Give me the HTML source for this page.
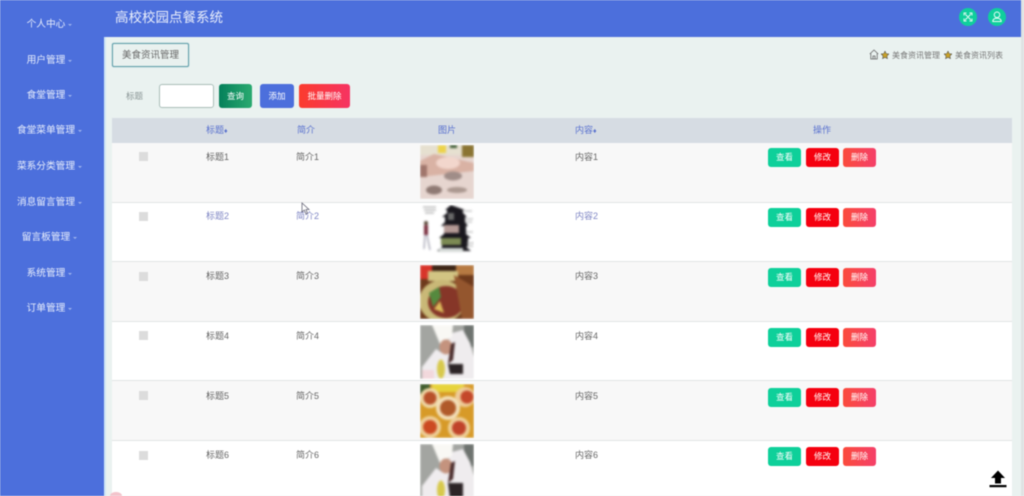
<!DOCTYPE html>
<html lang="zh"><head><meta charset="utf-8"><title>高校校园点餐系统</title>
<style>
*{box-sizing:border-box;margin:0;padding:0}
html,body{width:1024px;height:496px;overflow:hidden;background:#eaf2f0;font-family:"Liberation Sans","Noto Sans CJK SC",sans-serif}
.a{position:absolute}
#wrap{position:absolute;left:0;top:0;width:1024px;height:496px;overflow:hidden;filter:blur(.5px)}
.side{left:0;top:0;width:104px;height:496px;background:#4c6fdc}
.edge{left:104px;top:37px;width:2px;height:459px;background:#cfe6f5}
.head{left:0;top:0;width:1021px;height:37px;background:#4c6fdc}
.sb{left:1021px;top:0;width:3px;height:496px;background:#dfe3e3}
.m{color:#e8eefc;font-size:9.7px;line-height:14px;width:104px;text-align:center;white-space:nowrap}
.m i{position:absolute;width:0;height:0;border-left:2px solid transparent;border-right:2px solid transparent;border-top:2px solid #9db3ef;margin-left:3px;margin-top:6px}
.btn{color:#fff;font-size:8.5px;text-align:center;border-radius:3px;white-space:nowrap}
.t{font-size:9px;line-height:12px;color:#666;white-space:nowrap}
.th{font-size:9px;line-height:12px;color:#5a72cf;white-space:nowrap}
.row{left:112px;width:900px;border-bottom:1px solid #e2e4e4}
.cb{left:139px;width:9px;height:9px;background:#dcdcdc}
.v,.e,.d{width:33px;height:19px;line-height:19px;border-radius:3px}
.v{left:768px;background:#0ed09a}
.e{left:806px;background:#f5000f}
.d{left:843px;background:linear-gradient(90deg,#fb4b3c,#f54069)}
.img{left:420px;width:54px;height:54px;overflow:hidden}
.img svg{display:block;filter:blur(1px)}
</style></head><body>
<div id="wrap">
<div class="a side"></div>
<div class="a head"></div>
<div class="a edge"></div>
<div class="a sb"></div>
<div class="a" style="left:115px;top:9px;font-size:13.5px;line-height:18px;color:#e9eefb;white-space:nowrap">高校校园点餐系统</div>

<div class="a m" style="left:-6px;top:18px">个人中心<i></i></div>
<div class="a m" style="left:-6px;top:54px">用户管理<i></i></div>
<div class="a m" style="left:-6px;top:89px">食堂管理<i></i></div>
<div class="a m" style="left:-6px;top:124px">食堂菜单管理<i></i></div>
<div class="a m" style="left:-6px;top:160px">菜系分类管理<i></i></div>
<div class="a m" style="left:-6px;top:196px">消息留言管理<i></i></div>
<div class="a m" style="left:-6px;top:231px">留言板管理<i></i></div>
<div class="a m" style="left:-6px;top:267px">系统管理<i></i></div>
<div class="a m" style="left:-6px;top:302px">订单管理<i></i></div>

<div class="a" style="left:959px;top:8px;width:18px;height:18px;border-radius:50%;background:#10cf9c"></div>
<svg class="a" style="left:959px;top:8px" width="18" height="18" viewBox="0 0 18 18" fill="none" stroke="#e8fff8" stroke-width=".9"><path d="M6 6l6 6M12 6l-6 6M5 7.500V5h2.500M10.500 5H13v2.500M13 10.500V13h-2.500M7.500 13H5v-2.500"/></svg>
<div class="a" style="left:988px;top:8px;width:18px;height:18px;border-radius:50%;background:#10cf9c"></div>
<svg class="a" style="left:988px;top:8px" width="18" height="18" viewBox="0 0 18 18" fill="none" stroke="#e8fff8" stroke-width="1"><circle cx="9" cy="6.800" r="2.800"/><path d="M4.800 13.500c0-2.200 1.800-3.300 4.200-3.300s4.200 1.100 4.200 3.300z"/></svg>

<div class="a" style="left:112px;top:43px;width:77px;height:24px;border:1px solid #5f9eaa;border-radius:2px;background:#e9f1ef;color:#666;font-size:9.500px;line-height:23px;text-align:center;white-space:nowrap;box-shadow:0 0 1px #7fb2bd">美食资讯管理</div>

<svg class="a" style="left:869px;top:49px" width="10" height="11" viewBox="0 0 10 11" fill="none" stroke="#666" stroke-width=".8"><path d="M.8 5L5 1l4.200 4M1.800 4.500V10h6.400V4.500M4 10V7h2v3"/></svg>
<svg class="a" style="left:881px;top:51px" width="8" height="8" viewBox="0 0 10 10"><path d="M5 0l1.500 3.300 3.500.4-2.600 2.400.7 3.500L5 7.900 1.900 9.600l.7-3.500L0 3.700l3.500-.4z" fill="#c9a227" stroke="#555" stroke-width=".7"/></svg>
<div class="a" style="left:892px;top:50px;font-size:8px;line-height:11px;color:#777;white-space:nowrap">美食资讯管理</div>
<svg class="a" style="left:944px;top:51px" width="8" height="8" viewBox="0 0 10 10"><path d="M5 0l1.500 3.300 3.500.4-2.600 2.400.7 3.500L5 7.900 1.900 9.600l.7-3.500L0 3.700l3.500-.4z" fill="#c9a227" stroke="#555" stroke-width=".7"/></svg>
<div class="a" style="left:955px;top:50px;font-size:8px;line-height:11px;color:#777;white-space:nowrap">美食资讯列表</div>

<div class="a" style="left:126px;top:91px;font-size:8.500px;line-height:11px;color:#8a9696;white-space:nowrap">标题</div>
<div class="a" style="left:159px;top:84px;width:55px;height:24px;background:#fff;border:1px solid #a9bdb8;border-radius:3px"></div>
<div class="a btn" style="left:219px;top:84px;width:33px;height:24px;line-height:24px;background:linear-gradient(90deg,#05805a,#2aaa70)">查询</div>
<div class="a btn" style="left:260px;top:84px;width:34px;height:24px;line-height:24px;background:#4c6fdc">添加</div>
<div class="a btn" style="left:299px;top:84px;width:51px;height:24px;line-height:24px;background:linear-gradient(90deg,#fb3c2e,#f63462)">批量删除</div>

<div class="a" style="left:112px;top:118px;width:900px;height:25px;background:#d6dce3"></div>
<div class="a th" style="left:206px;top:124px">标题<span style="font-size:7px">♦</span></div>
<div class="a th" style="left:297px;top:124px">简介</div>
<div class="a th" style="left:438px;top:124px">图片</div>
<div class="a th" style="left:575px;top:124px">内容<span style="font-size:7px">♦</span></div>
<div class="a th" style="left:813px;top:124px">操作</div>

<div class="a row" style="top:143px;height:60px;background:#f8f8f8"></div>
<div class="a row" style="top:203px;height:59px;background:#fff"></div>
<div class="a row" style="top:262px;height:60px;background:#f8f8f8"></div>
<div class="a row" style="top:322px;height:59px;background:#fff"></div>
<div class="a row" style="top:381px;height:60px;background:#f8f8f8"></div>
<div class="a row" style="top:441px;height:55px;background:#fff;border:0"></div>

<div class="a cb" style="top:152px"></div><div class="a t" style="left:206px;top:151px">标题1</div><div class="a t" style="left:296px;top:151px">简介1</div><div class="a t" style="left:575px;top:151px">内容1</div>
<div class="a btn v" style="top:148px">查看</div><div class="a btn e" style="top:148px">修改</div><div class="a btn d" style="top:148px">删除</div>

<div class="a cb" style="top:212px"></div><div class="a t" style="left:206px;top:210px;color:#7f86c4">标题2</div><div class="a t" style="left:296px;top:210px;color:#7f86c4">简介2</div><div class="a t" style="left:575px;top:210px;color:#7f86c4">内容2</div>
<div class="a btn v" style="top:208px">查看</div><div class="a btn e" style="top:208px">修改</div><div class="a btn d" style="top:208px">删除</div>

<div class="a cb" style="top:272px"></div><div class="a t" style="left:206px;top:270px">标题3</div><div class="a t" style="left:296px;top:270px">简介3</div><div class="a t" style="left:575px;top:270px">内容3</div>
<div class="a btn v" style="top:268px">查看</div><div class="a btn e" style="top:268px">修改</div><div class="a btn d" style="top:268px">删除</div>

<div class="a cb" style="top:331px"></div><div class="a t" style="left:206px;top:330px">标题4</div><div class="a t" style="left:296px;top:330px">简介4</div><div class="a t" style="left:575px;top:330px">内容4</div>
<div class="a btn v" style="top:328px">查看</div><div class="a btn e" style="top:328px">修改</div><div class="a btn d" style="top:328px">删除</div>

<div class="a cb" style="top:391px"></div><div class="a t" style="left:206px;top:390px">标题5</div><div class="a t" style="left:296px;top:390px">简介5</div><div class="a t" style="left:575px;top:390px">内容5</div>
<div class="a btn v" style="top:388px">查看</div><div class="a btn e" style="top:388px">修改</div><div class="a btn d" style="top:388px">删除</div>

<div class="a cb" style="top:451px"></div><div class="a t" style="left:206px;top:449px">标题6</div><div class="a t" style="left:296px;top:449px">简介6</div><div class="a t" style="left:575px;top:449px">内容6</div>
<div class="a btn v" style="top:447px">查看</div><div class="a btn e" style="top:447px">修改</div><div class="a btn d" style="top:447px">删除</div>

<!-- food 1 -->
<div class="a img" style="top:145px"><svg width="54" height="54" viewBox="0 0 54 54">
<rect width="54" height="54" fill="#e6d5cf"/><rect width="54" height="10" fill="#e6e0d0"/>
<rect x="42" y="0" width="12" height="12" fill="#8a7433"/><rect x="18" y="0" width="8" height="8" fill="#ecd34a"/><rect x="30" y="0" width="7" height="3" fill="#3b5a32"/>
<path d="M0 16L14 9 28 12 54 18V26L0 32z" fill="#d9b2a4"/><ellipse cx="28" cy="18" rx="12" ry="6" fill="#f2d6cc"/>
<ellipse cx="33" cy="31" rx="9" ry="4.500" fill="#a08d88"/><ellipse cx="14" cy="45" rx="8" ry="4.500" fill="#8f7a74"/><ellipse cx="37" cy="45" rx="10" ry="3" fill="#ab9890"/><rect x="0" y="20" width="7" height="12" fill="#a0766c"/></svg></div>
<!-- pagoda -->
<div class="a img" style="top:205px"><svg width="54" height="54" viewBox="0 0 54 54">
<rect width="54" height="54" fill="#fff"/>
<path d="M31 0l-6 5h2v3l-5 4h3v5l-4 4h3v8l-5 4h3v9l-5 4h34l-5-4h2v-9h3l-5-4v-8h2l-3-4v-5h2l-4-4V5h2z" fill="#1a181e"/>
<rect x="28" y="8" width="6" height="7" fill="#6a6a6a"/><rect x="24" y="20" width="15" height="8" fill="#b59a96"/><rect x="21" y="33" width="20" height="7" fill="#7c8a54"/><rect x="19" y="43" width="24" height="4" fill="#d6dbd8"/>
<rect x="4" y="20" width="4" height="10" fill="#7b3040"/><circle cx="6" cy="18" r="2" fill="#543"/><path d="M5 30l-1 14M7 30l3 15" stroke="#99a" stroke-width="1.200"/>
<path d="M3 2h13M4 5h12M5 8h9" stroke="#999" stroke-width="1"/><path d="M44 6h8M45 14h8M45 17h7M46 27h7M47 38h7M47 41h6" stroke="#bbb" stroke-width="1.200"/></svg></div>
<!-- food 3 -->
<div class="a img" style="top:265px"><svg width="54" height="54" viewBox="0 0 54 54">
<rect width="54" height="54" fill="#6e3a1c"/><rect width="12" height="14" fill="#d8342a"/><rect x="12" width="26" height="6" fill="#3c2415"/><rect x="36" width="18" height="10" fill="#b67a42"/>
<rect x="8" y="6" width="30" height="10" fill="#d2c483"/><ellipse cx="22" cy="36" rx="23" ry="21" fill="#c9b877"/><ellipse cx="26" cy="37" rx="18" ry="16" fill="#863628"/><path d="M9 28l10-6 2 10-8 10z" fill="#55893e"/><path d="M14 44l6-8 4 12z" fill="#dcbb5a"/>
<path d="M34 10l20 12v32H42z" fill="#94562e"/></svg></div>
<!-- chef 4 -->
<div class="a img" style="top:325px"><svg width="54" height="54" viewBox="0 0 54 54">
<rect width="54" height="54" fill="#a3a5a1"/><rect x="44" width="10" height="22" fill="#6e736f"/>
<path d="M2 42L16 24 22 28 32 8 43 5 50 18 54 32V54H2z" fill="#efecee"/>
<path d="M12 0h21L32 12l-12 7z" fill="#f9f8f4"/><ellipse cx="26" cy="22" rx="6.500" ry="7.500" fill="#c4937e"/>
<path d="M31 19l4-2-2 18-5 4z" fill="#4a2c2c"/><path d="M28 39h15v10H30z" fill="#2c2426"/>
<ellipse cx="21" cy="44" rx="4" ry="9.500" fill="#d8c94c"/><rect x="2" y="45" width="12" height="9" fill="#f2d8dc"/></svg></div>
<!-- food 5 -->
<div class="a img" style="top:384px"><svg width="54" height="54" viewBox="0 0 54 54">
<rect width="54" height="54" fill="#d79a28"/><rect x="12" width="32" height="8" fill="#e7d33c"/><rect width="10" height="10" fill="#3d5a2a"/>
<circle cx="10" cy="14" r="10" fill="#f0d9a8"/><circle cx="10" cy="14" r="6.500" fill="#b8502a"/><circle cx="45" cy="13" r="10" fill="#eecb98"/><circle cx="47" cy="13" r="6.500" fill="#c4482a"/>
<circle cx="28" cy="24" r="12" fill="#f3dfb8"/><circle cx="28" cy="24" r="8" fill="#b05a2a"/><circle cx="10" cy="43" r="11" fill="#eecf98"/><circle cx="10" cy="43" r="7" fill="#cc4a22"/><circle cx="39" cy="44" r="11" fill="#eecf98"/><circle cx="39" cy="44" r="7" fill="#c0432a"/></svg></div>
<!-- chef 6 -->
<div class="a img" style="top:444px"><svg width="54" height="54" viewBox="0 0 54 54">
<rect width="54" height="54" fill="#a3a5a1"/><rect x="44" width="10" height="22" fill="#6e736f"/>
<path d="M2 42L16 24 22 28 32 8 43 5 50 18 54 32V54H2z" fill="#efecee"/>
<path d="M12 0h21L32 12l-12 7z" fill="#f9f8f4"/><ellipse cx="26" cy="22" rx="6.500" ry="7.500" fill="#c4937e"/>
<path d="M31 19l4-2-2 18-5 4z" fill="#4a2c2c"/><path d="M28 39h15v15H30z" fill="#2c2426"/>
<ellipse cx="21" cy="46" rx="4" ry="9.500" fill="#d8c94c"/></svg></div>

<svg class="a" style="left:301px;top:202px" width="9" height="13" viewBox="0 0 9 13"><path d="M1 1v9l2.300-2 1.700 4 1.500-.7L5 7.500h3z" fill="#fff" stroke="#667" stroke-width=".8"/></svg>
<svg class="a" style="left:988px;top:470px" width="20" height="18" viewBox="0 0 20 18"><path d="M10 .5L17 8h-4v5.500H7V8H3z" fill="#000"/><rect x="1.500" y="15" width="17" height="2.200" fill="#000"/></svg>
<div class="a" style="left:110px;top:492px;width:12px;height:8px;border-radius:50%;background:#f3c4cc"></div>
</div>
</body></html>
